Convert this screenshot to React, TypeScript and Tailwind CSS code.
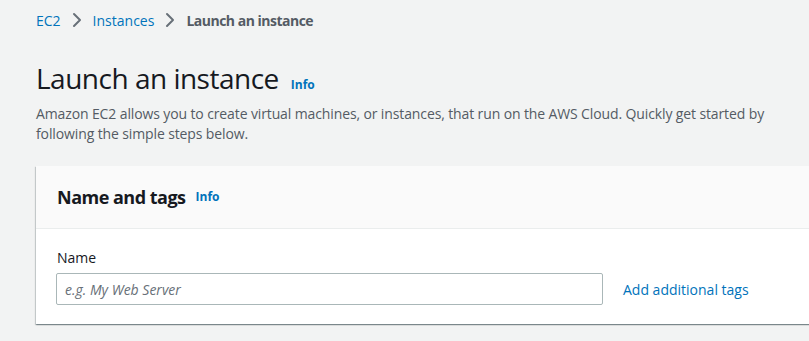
function InfoLink() {
  return <span className="text-[12px] font-bold text-[#0073bb] cursor-pointer">Info</span>;
}

function Chevron() {
  return (
    <svg width="10" height="16" viewBox="0 0 10 16" className="mx-[11px] text-[#687078]" fill="none">
      <polyline points="2,2 8,8 2,14" stroke="currentColor" strokeWidth="2" strokeLinecap="round" strokeLinejoin="round" />
    </svg>
  );
}

export default function App() {
  return (
    <div
      className="w-[809px] h-[341px] overflow-hidden bg-[#f2f3f3] text-[#16191f]"
      style={{ fontFamily: '"Open Sans", "Noto Sans", sans-serif' }}
    >
      <div className="w-[790px] pl-[36px] pt-[9px]">
        {/* Breadcrumbs */}
        <nav className="flex items-center h-[22px] text-[14px]">
          <span className="text-[#0073bb]">EC2</span>
          <Chevron />
          <span className="text-[#0073bb]">Instances</span>
          <Chevron />
          <span className="font-bold text-[#545b64] tracking-[-0.5px]">Launch an instance</span>
        </nav>

        {/* Page header */}
        <div className="mt-[29px] flex items-baseline gap-[12px]">
          <h1 className="text-[28px] leading-[36px] font-normal tracking-[-0.5px]">Launch an instance</h1>
          <InfoLink />
        </div>
        <p className="mt-[8px] text-[14px] leading-[20px] text-[#545b64] w-[790px] tracking-[-0.12px]">
          Amazon EC2 allows you to create virtual machines, or instances, that run on the AWS Cloud. Quickly get started by
          <br />
          following the simple steps below.
        </p>

        {/* Card */}
        <div className="mt-[22px] w-[800px] bg-white shadow-[0_1px_1px_0_rgba(0,28,36,0.3),1px_1px_1px_0_rgba(0,28,36,0.15),-1px_1px_1px_0_rgba(0,28,36,0.15)]">
          <div className="h-[63px] bg-[#fafafa] border-b border-[#eaeded] flex items-center pl-[21px] gap-[10px]">
            <h2 className="text-[18px] font-bold leading-[22px] tracking-[-0.5px]">Name and tags</h2>
            <InfoLink />
          </div>
          <div className="pl-[20px] pt-[18px] pb-[19px]">
            <label className="block text-[14px] leading-[22px] text-[#16191f] pl-[1px]">Name</label>
            <div className="mt-[4px] flex items-center gap-[20px]">
              <input
                className="w-[547px] h-[32px] border border-[#aab7b8] rounded-[2px] px-[8px] text-[14px] placeholder:italic placeholder:text-[#687078] outline-none"
                placeholder="e.g. My Web Server"
              />
              <span className="text-[14px] text-[#0073bb]">Add additional tags</span>
            </div>
          </div>
        </div>
      </div>
    </div>
  );
}
